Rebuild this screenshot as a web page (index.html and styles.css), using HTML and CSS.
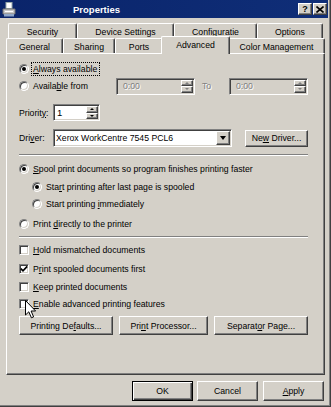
FILE: index.html
```html
<!DOCTYPE html>
<html lang="en">
<head>
<meta charset="UTF-8">
<title>Properties</title>
<link rel="stylesheet" href="styles.css">
</head>
<body>

<div class="window">
  <!-- caption -->
  <div class="titlebar">
    <svg class="app-icon" width="14" height="15" viewBox="0 0 14 15">
      <rect x="4" y="0.5" width="6" height="6" fill="#fff" stroke="#9aa" stroke-width="1"/>
      <path d="M1 7 L13 7 L13 12 L1 12 Z" fill="#c8c8c8" stroke="#707070"/>
      <rect x="2" y="12" width="10" height="2.5" fill="#8fa6c8"/>
      <rect x="3" y="9" width="8" height="1" fill="#fff"/>
    </svg>
    <span class="title">Properties</span>
    <div class="caption-buttons">
      <span class="cap-btn">?</span>
      <span class="cap-btn">
        <svg width="8" height="7" viewBox="0 0 8 7"><path d="M0.5 0.5 L7.5 6.5 M7.5 0.5 L0.5 6.5" stroke="#000" stroke-width="1.6"/></svg>
      </span>
    </div>
  </div>

  <!-- tabs -->
  <div class="tabs">
    <div class="tab-row back">
      <div class="tab t-security">Security</div>
      <div class="tab t-device">Device Settings</div>
      <div class="tab t-config">Configuratie</div>
      <div class="tab t-options">Options</div>
    </div>
    <div class="tab-row front">
      <div class="tab t-general">General</div>
      <div class="tab t-sharing">Sharing</div>
      <div class="tab t-ports">Ports</div>
      <div class="tab t-advanced selected">Advanced</div>
      <div class="tab t-color">Color Management</div>
    </div>
  </div>

  <div class="panel">
    <div class="row opt r-always">
      <span class="radio checked"></span><span class="focus"><u>A</u>lways available</span>
    </div>
    <div class="row r-from">
      <span class="radio"></span><span class="from-label">Availa<u>b</u>le from</span>
      <div class="spin spin-time disabled">
        <span class="spin-value">0:00</span>
        <span class="spin-buttons">
          <span class="spin-btn"><span class="arrow-up"></span></span>
          <span class="spin-btn"><span class="arrow-down"></span></span>
        </span>
      </div>
      <span class="to-label">To</span>
      <div class="spin spin-time disabled">
        <span class="spin-value">0:00</span>
        <span class="spin-buttons">
          <span class="spin-btn"><span class="arrow-up"></span></span>
          <span class="spin-btn"><span class="arrow-down"></span></span>
        </span>
      </div>
    </div>
    <div class="row r-priority">
      <span class="field-label">Priorit<u>y</u>:</span>
      <div class="spin spin-priority">
        <span class="spin-value">1</span>
        <span class="spin-buttons">
          <span class="spin-btn"><span class="arrow-up"></span></span>
          <span class="spin-btn"><span class="arrow-down"></span></span>
        </span>
      </div>
    </div>
    <div class="row r-driver">
      <span class="field-label">Dri<u>v</u>er:</span>
      <div class="select">
        <span class="select-value">Xerox WorkCentre 7545 PCL6</span>
        <span class="select-btn"><span class="arrow-down big"></span></span>
      </div>
      <button class="btn new-driver"><span>Ne<u>w</u> Driver...</span></button>
    </div>

    <div class="sep sep-1"></div>

    <div class="row opt r-spool">
      <span class="radio checked"></span><span><u>S</u>pool print documents so program finishes printing faster</span>
    </div>
    <div class="row opt sub r-after">
      <span class="radio checked"></span><span>Sta<u>r</u>t printing after last page is spooled</span>
    </div>
    <div class="row opt sub r-immed">
      <span class="radio"></span><span>Start printing <u>i</u>mmediately</span>
    </div>
    <div class="row opt r-direct">
      <span class="radio"></span><span>Print <u>d</u>irectly to the printer</span>
    </div>

    <div class="sep sep-2"></div>

    <div class="row opt r-hold">
      <span class="check"></span><span><u>H</u>old mismatched documents</span>
    </div>
    <div class="row opt r-first">
      <span class="check">
        <svg width="8" height="8" viewBox="0 0 8 8"><path d="M0.8 3.6 L3 5.8 L7.2 1.4" fill="none" stroke="#000" stroke-width="1.7"/></svg>
      </span><span>P<u>r</u>int spooled documents first</span>
    </div>
    <div class="row opt r-keep">
      <span class="check"></span><span><u>K</u>eep printed documents</span>
    </div>
    <div class="row opt r-enable">
      <span class="check"></span><span><u>E</u>nable advanced printing features</span>
    </div>

    <div class="row r-buttons">
      <button class="btn b-defaults"><span>Printing De<u>f</u>aults...</span></button>
      <button class="btn b-processor"><span>Pri<u>n</u>t Processor...</span></button>
      <button class="btn b-separator"><span>Separat<u>o</u>r Page...</span></button>
    </div>
  </div>

  <div class="footer">
    <button class="btn dialog-btn default"><span>OK</span></button>
    <button class="btn dialog-btn"><span>Cancel</span></button>
    <button class="btn dialog-btn apply"><span><u>A</u>pply</span></button>
  </div>

  <!-- mouse pointer over the checkbox -->
  <svg class="pointer" width="12" height="19" viewBox="0 0 12 19">
    <path d="M0.5 0.5 L0.5 15 L3.8 11.8 L6.4 17.8 L8.6 16.9 L6.1 11 L10.6 11 Z" fill="#fff" stroke="#000" stroke-width="1"/>
  </svg>
</div>

</body>
</html>
```

FILE: styles.css
```css
* {
  box-sizing: border-box;
}

body {
  margin: 0;
  background: #d4d0c8;
  font-family: "Liberation Sans", Arial, sans-serif;
  font-size: 8.7px;
  color: #000;
}

u {
  text-decoration: underline;
  text-underline-offset: 1px;
}

.window {
  position: relative;
  width: 331px;
  height: 407px;
  background: #d4d0c8;
  border-right: 1px solid #404040;
  border-bottom: 1px solid #404040;
  box-shadow: inset -1px -1px 0 #808080;
  padding-right: 2px;
  display: flex;
  flex-direction: column;
  overflow: hidden;
}

/* caption bar */
.titlebar {
  height: 18px;
  flex: none;
  display: flex;
  align-items: center;
  padding-left: 2px;
  background: linear-gradient(to right, #0a246a, #0f2e78);
}

.app-icon {
  flex: none;
}

.title {
  margin-left: 57px;
  color: #fff;
  font-weight: bold;
  font-size: 9.5px;
}

.caption-buttons {
  margin-left: auto;
  margin-right: 1px;
  display: flex;
  gap: 1px;
}

.cap-btn {
  width: 14px;
  height: 12px;
  display: flex;
  align-items: center;
  justify-content: center;
  background: #d4d0c8;
  border: 1px solid;
  border-color: #fff #404040 #404040 #fff;
  box-shadow: inset -1px -1px 0 #808080;
  font-weight: bold;
  font-size: 9px;
  line-height: 1;
}

/* tabs */
.tabs {
  padding-top: 5px;
  flex: none;
}

.tab-row {
  display: flex;
  height: 15px;
}

.tab-row.back {
  margin-left: 8px;
}

.tab-row.front {
  margin-left: 6px;
}

.tab {
  display: flex;
  align-items: center;
  justify-content: center;
  height: 15px;
  padding-top: 1px;
  background: #d4d0c8;
  border-top: 1px solid #fff;
  border-left: 1px solid #fff;
  border-right: 1px solid #404040;
  box-shadow: inset -1px 0 0 #808080;
  border-radius: 2px 2px 0 0;
  white-space: nowrap;
}

.t-security { width: 69px; }
.t-device { width: 97px; }
.t-config { width: 83px; }
.t-options { width: 66px; }
.t-general { width: 57px; }
.t-sharing { width: 52px; }
.t-ports { width: 48px; }
.t-advanced { width: 65px; }
.t-color { width: 97px; }

.tab.selected {
  position: relative;
  z-index: 1;
  width: 69px;
  height: 18px;
  margin: -2px -2px -1px;
  padding-top: 0;
  padding-bottom: 2px;
}

/* property page */
.panel {
  width: 319px;
  height: 322px;
  margin-left: 6px;
  flex: none;
  border: 1px solid;
  border-color: #fff #404040 #404040 #fff;
  box-shadow: inset -1px -1px 0 #808080;
  padding: 6px 0 0 12px;
}

.row {
  display: flex;
  align-items: center;
  white-space: nowrap;
}

.opt {
  height: 16px;
}

.sub {
  padding-left: 13px;
}

.radio {
  flex: none;
  position: relative;
  width: 10px;
  height: 10px;
  margin-right: 4px;
  border-radius: 50%;
  background: #fff;
  border: 1px solid;
  border-color: #808080 #fff #fff #808080;
  box-shadow: inset 1px 1px 0 #404040, inset -1px -1px 0 #d4d0c8;
}

.radio.checked::after {
  content: "";
  position: absolute;
  left: 2px;
  top: 2px;
  width: 4px;
  height: 4px;
  border-radius: 50%;
  background: #000;
}

.check {
  flex: none;
  width: 10px;
  height: 10px;
  margin-right: 4px;
  background: #fff;
  border: 1px solid;
  border-color: #808080 #fff #fff #808080;
  box-shadow: inset 1px 1px 0 #404040, inset -1px -1px 0 #d4d0c8;
  display: flex;
  align-items: center;
  justify-content: center;
}

.focus {
  outline: 1px dotted #000;
  outline-offset: 1px;
  padding: 0 1px 0 0;
}

.r-always {
  height: 16px;
  margin-top: 1px;
}

.r-from {
  height: 18px;
}

.from-label {
  width: 83px;
}

.to-label {
  width: 27px;
  margin-left: 7px;
  color: #808080;
  text-shadow: 1px 1px 0 #fff;
}

.spin {
  display: flex;
  height: 17px;
  background: #fff;
  border: 1px solid;
  border-color: #808080 #fff #fff #808080;
  box-shadow: inset 1px 1px 0 #404040, inset -1px -1px 0 #d4d0c8;
  padding: 1px;
}

.spin-time {
  width: 79px;
}

.spin.disabled {
  background: #d4d0c8;
  color: #808080;
}

.spin-value {
  flex: 1;
  display: flex;
  align-items: center;
  padding-left: 5px;
}

.spin.disabled .spin-value {
  text-shadow: 1px 1px 0 #fff;
}

.spin-buttons {
  width: 12px;
  display: flex;
  flex-direction: column;
}

.spin-btn {
  flex: 1;
  display: flex;
  align-items: center;
  justify-content: center;
  background: #d4d0c8;
  border: 1px solid;
  border-color: #fff #404040 #404040 #fff;
  box-shadow: inset -1px -1px 0 #808080;
}

.arrow-up,
.arrow-down {
  width: 0;
  height: 0;
  border-left: 2px solid transparent;
  border-right: 2px solid transparent;
}

.arrow-up {
  border-bottom: 2px solid #000;
}

.arrow-down {
  border-top: 2px solid #000;
}

.disabled .arrow-up {
  border-bottom-color: #808080;
}

.disabled .arrow-down {
  border-top-color: #808080;
}

.arrow-down.big {
  border-left-width: 3.5px;
  border-right-width: 3.5px;
  border-top-width: 4px;
}

.r-priority {
  margin-top: 9px;
  height: 17px;
}

.field-label {
  width: 34px;
}

.spin-priority {
  width: 47px;
}

.spin-priority .spin-value {
  padding-left: 2px;
  font-size: 9.5px;
}

.r-driver {
  margin-top: 8px;
  height: 18px;
}

.select {
  display: flex;
  width: 179px;
  height: 18px;
  background: #fff;
  border: 1px solid;
  border-color: #808080 #fff #fff #808080;
  box-shadow: inset 1px 1px 0 #404040, inset -1px -1px 0 #d4d0c8;
  padding: 1px;
}

.select-value {
  flex: 1;
  display: flex;
  align-items: center;
  padding-left: 1px;
}

.select-btn {
  width: 14px;
  display: flex;
  align-items: center;
  justify-content: center;
  background: #d4d0c8;
  border: 1px solid;
  border-color: #fff #404040 #404040 #fff;
  box-shadow: inset -1px -1px 0 #808080;
}

.btn {
  font: inherit;
  color: #000;
  background: #d4d0c8;
  border: 1px solid;
  border-color: #fff #404040 #404040 #fff;
  box-shadow: inset -1px -1px 0 #808080;
  padding: 0;
  display: flex;
  align-items: center;
  justify-content: center;
  white-space: nowrap;
}

.new-driver {
  width: 63px;
  height: 17px;
  margin-left: 13px;
}

.sep {
  width: 289px;
  height: 2px;
  border-top: 1px solid #808080;
  border-bottom: 1px solid #fff;
}

.sep-1 {
  margin-top: 7px;
}

.r-spool { margin-top: 5px; }
.r-after { margin-top: 2px; }
.r-immed { margin-top: 1px; }
.r-direct { margin-top: 4px; }

.sep-2 {
  margin-top: 4px;
}

.r-hold { margin-top: 4px; }
.r-first { margin-top: 3px; }
.r-keep { margin-top: 2px; }
.r-enable { margin-top: 1px; }

.r-buttons {
  margin-top: 4px;
  gap: 6px;
}

.r-buttons .btn {
  height: 19px;
}

.b-defaults { width: 94px; }
.b-processor { width: 89px; }
.b-separator { width: 94px; }

/* dialog buttons */
.footer {
  display: flex;
  justify-content: flex-end;
  margin-top: 6px;
  margin-right: 4px;
  gap: 4px;
}

.dialog-btn {
  width: 61px;
  height: 20px;
}

.dialog-btn.default {
  border: 1px solid #000;
  box-shadow: inset 1px 1px 0 #fff, inset -1px -1px 0 #404040, inset -2px -2px 0 #808080;
}

.dialog-btn.apply {
  margin-left: 1px;
}

.pointer {
  position: absolute;
  left: 25px;
  top: 300px;
}
```
